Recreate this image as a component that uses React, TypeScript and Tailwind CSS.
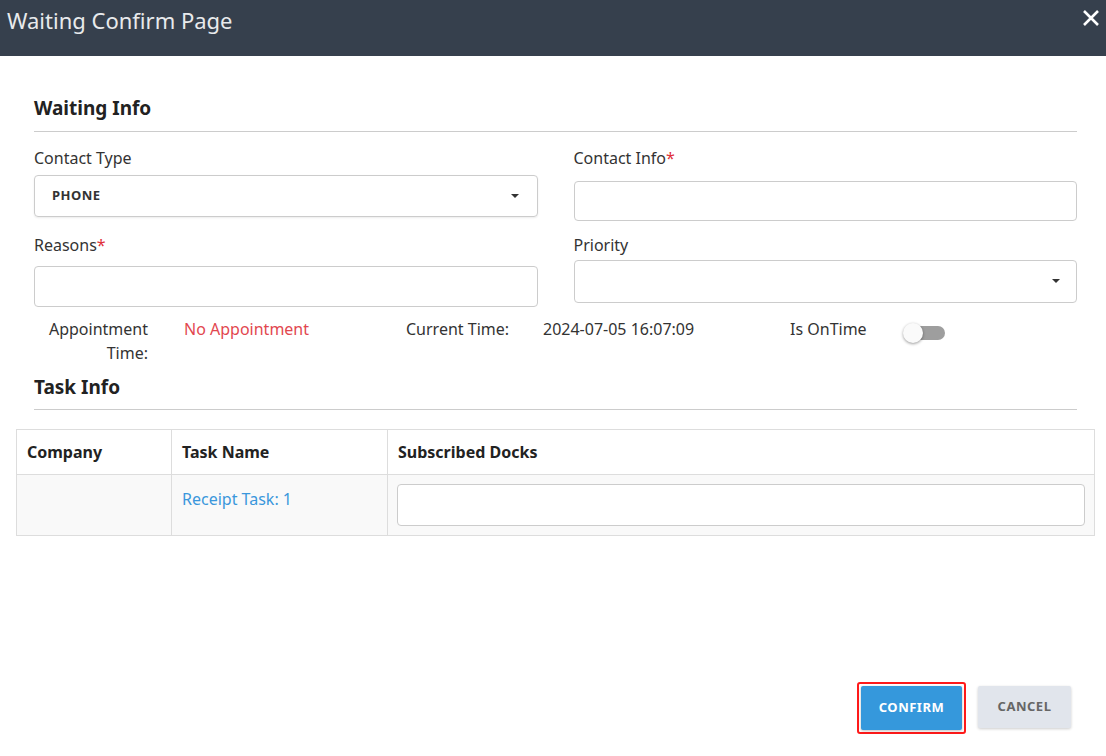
import React from 'react'

const Caret = () => (
  <svg width="10" height="6" viewBox="0 0 10 6" className="text-[#333]">
    <path d="M1 1h8L5 5z" fill="currentColor" />
  </svg>
)

export default function App() {
  return (
    <div className="w-[1106px] h-[756px] bg-white relative font-['Liberation_Sans',Arial,sans-serif] text-[#333] overflow-hidden">
      {/* Header */}
      <div className="h-[56px] bg-[#36404d] flex items-start justify-between px-[7px] pt-[4px]">
        <div className="text-[22px] text-[#e8eaec]">Waiting Confirm Page</div>
        <svg width="20" height="20" viewBox="0 0 20 20" className="mt-[4px] mr-[-2px]">
          <path d="M3 3l14 14M17 3L3 17" stroke="#fff" strokeWidth="2.6" />
        </svg>
      </div>

      <div className="px-[34px] w-[1111px]">
        <div className="mt-[38px] text-[19px] font-bold text-[#222] pb-[8px] border-b border-[#ccc]">Waiting Info</div>

        <div className="grid grid-cols-2 gap-x-[36px] w-[1043px]">
          <div>
            <div className="mt-[14px] text-[16px] h-[20px]">Contact Type</div>
            <div className="mt-[9px] h-[42px] border border-[#ccc] rounded-[4px] flex items-center justify-between px-[17px] shadow-[0_1px_2px_rgba(0,0,0,0.08)]">
              <span className="text-[13px] font-bold tracking-[0.5px]">PHONE</span>
              <Caret />
            </div>
          </div>
          <div>
            <div className="mt-[14px] text-[16px] h-[20px]">
              Contact Info<span className="text-[#e0303a]">*</span>
            </div>
            <div className="mt-[15px] h-[40px] border border-[#ccc] rounded-[4px]" />
          </div>
          <div>
            <div className="mt-[12px] text-[16px] h-[20px]">
              Reasons<span className="text-[#e0303a]">*</span>
            </div>
            <div className="mt-[13px] h-[41px] border border-[#ccc] rounded-[4px]" />
          </div>
          <div>
            <div className="mt-[12px] text-[16px] h-[20px]">Priority</div>
            <div className="mt-[7px] h-[43px] border border-[#ccc] rounded-[4px] flex items-center justify-end px-[15px]">
              <Caret />
            </div>
          </div>
        </div>

        {/* Info row */}
        <div className="flex items-start text-[16px] mt-[10px] leading-[24px]">
          <div className="w-[114px] text-right">Appointment Time:</div>
          <div className="ml-[36px] w-[222px] text-[#e2474f]">No Appointment</div>
          <div className="w-[137px]">Current Time:</div>
          <div className="w-[247px]">2024-07-05 16:07:09</div>
          <div className="w-[113px]">Is OnTime</div>
          <div className="relative w-[42px] h-[20px] mt-[6px]">
            <div className="absolute left-[8px] top-[3px] w-[34px] h-[14px] rounded-full bg-[#9e9e9e]" />
            <div className="absolute left-0 top-0 w-[20px] h-[20px] rounded-full bg-[#fafafa] shadow-[0_1px_3px_rgba(0,0,0,0.4)]" />
          </div>
        </div>

        <div className="mt-[8px] text-[19px] font-bold text-[#222] pb-[8px] border-b border-[#ccc] w-[1043px]">Task Info</div>
      </div>

      {/* Table */}
      <div className="ml-[16px] mt-[19px] w-[1079px] border border-[#ddd] text-[16px]">
        <div className="flex h-[45px] border-b border-[#ddd] font-bold text-[#222]">
          <div className="w-[155px] px-[10px] flex items-center border-r border-[#ddd]">Company</div>
          <div className="w-[216px] px-[10px] flex items-center border-r border-[#ddd]">Task Name</div>
          <div className="flex-1 px-[10px] flex items-center">Subscribed Docks</div>
        </div>
        <div className="flex h-[60px] bg-[#f9f9f9]">
          <div className="w-[155px] border-r border-[#ddd]" />
          <div className="w-[216px] px-[10px] pt-[12px] border-r border-[#ddd] text-[#3a97dc]">Receipt Task: 1</div>
          <div className="flex-1 px-[9px] pt-[9px]">
            <div className="h-[42px] bg-white border border-[#ccc] rounded-[4px]" />
          </div>
        </div>
      </div>

      {/* Buttons */}
      <div className="absolute left-[857px] top-[682px] flex items-start gap-[12px]">
        <div className="rounded-[3px] border-[2px] border-[#ff1a1a] p-[2px]">
          <div className="w-[101px] h-[44px] bg-[#3598dc] rounded-[2px] text-white text-[13px] font-bold tracking-[0.5px] flex items-center justify-center shadow-[0_1px_3px_rgba(0,0,0,0.25)]">
            CONFIRM
          </div>
        </div>
        <div className="mt-[4px] w-[93px] h-[42px] bg-[#e1e5ec] rounded-[2px] text-[#666] text-[13px] font-bold tracking-[0.5px] flex items-center justify-center shadow-[0_1px_3px_rgba(0,0,0,0.2)]">
          CANCEL
        </div>
      </div>
    </div>
  )
}
